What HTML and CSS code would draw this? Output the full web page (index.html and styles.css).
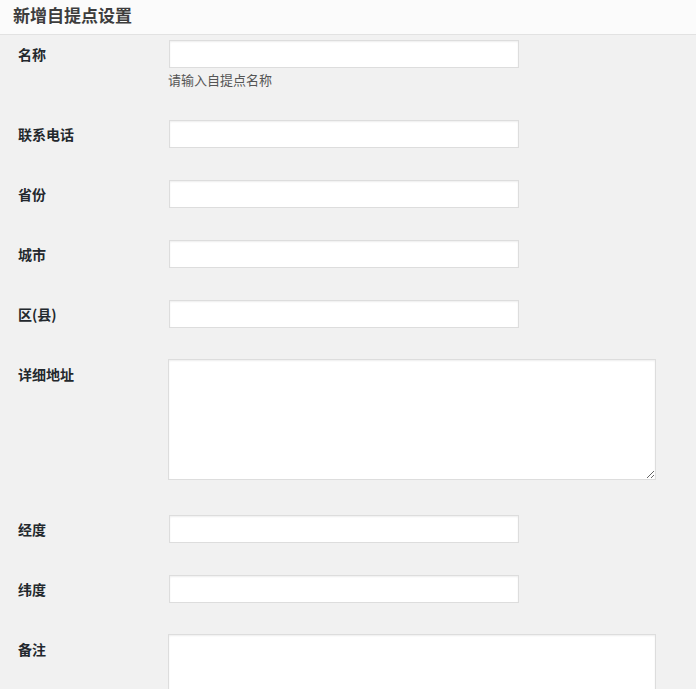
FILE: index.html
```html
<!DOCTYPE html>
<html lang="zh-CN">
<head>
<meta charset="utf-8">
<title>新增自提点设置</title>
<link rel="stylesheet" href="styles.css">
</head>
<body>
<div class="panel">
  <h2 class="panel-title">新增自提点设置</h2>
  <form class="form">
    <div class="row row-first">
      <label class="label">名称</label>
      <div class="field">
        <input class="input" type="text">
        <p class="description">请输入自提点名称</p>
      </div>
    </div>
    <div class="row">
      <label class="label">联系电话</label>
      <div class="field"><input class="input" type="text"></div>
    </div>
    <div class="row">
      <label class="label">省份</label>
      <div class="field"><input class="input" type="text"></div>
    </div>
    <div class="row">
      <label class="label">城市</label>
      <div class="field"><input class="input" type="text"></div>
    </div>
    <div class="row">
      <label class="label">区(县)</label>
      <div class="field"><input class="input" type="text"></div>
    </div>
    <div class="row row-area">
      <label class="label">详细地址</label>
      <div class="field"><textarea class="textarea"></textarea></div>
    </div>
    <div class="row">
      <label class="label">经度</label>
      <div class="field"><input class="input" type="text"></div>
    </div>
    <div class="row">
      <label class="label">纬度</label>
      <div class="field"><input class="input" type="text"></div>
    </div>
    <div class="row row-area">
      <label class="label">备注</label>
      <div class="field"><textarea class="textarea"></textarea></div>
    </div>
  </form>
</div>
</body>
</html>
```
FILE: styles.css
```css
html, body {
  margin: 0;
  padding: 0;
  background: #f1f1f1;
  overflow: hidden;
}
body {
  font-family: "Noto Sans CJK SC", "Noto Sans", "Liberation Sans", sans-serif;
  color: #23282d;
}
.panel-title {
  margin: 0;
  height: 35px;
  box-sizing: border-box;
  padding: 3px 13px 0;
  font-size: 17px;
  line-height: 24px;
  font-weight: 700;
  color: #3d3d3d;
  background: #fbfbfb;
  border-bottom: 1px solid #e2e2e2;
}
.form {
  display: flex;
  flex-direction: column;
}
.row {
  display: flex;
  padding: 16px 0;
}
.row-first {
  padding: 5px 0 14px;
}
.row-area {
  padding: 15px 0 19px;
}
.label {
  flex: 0 0 169px;
  box-sizing: border-box;
  padding: 4px 0 0 18px;
  font-size: 14px;
  line-height: 20px;
  font-weight: 700;
  color: #23282d;
}
.row-area .label {
  padding-top: 5px;
}
.field {
  display: flex;
  flex-direction: column;
}
.input {
  width: 350px;
  height: 28px;
  box-sizing: border-box;
  margin: 0;
  border: 1px solid #dddddd;
  background: #fff;
  box-shadow: inset 0 1px 2px rgba(0, 0, 0, 0.07);
  outline: none;
}
.textarea {
  display: block;
  width: 488px;
  height: 121px;
  box-sizing: border-box;
  margin: 0 0 0 -1px;
  border: 1px solid #dddddd;
  background: #fff;
  box-shadow: inset 0 1px 2px rgba(0, 0, 0, 0.07);
  outline: none;
}
.description {
  margin: 2px 0 0 -1px;
  font-size: 13px;
  line-height: 20px;
  color: #555;
}
```
